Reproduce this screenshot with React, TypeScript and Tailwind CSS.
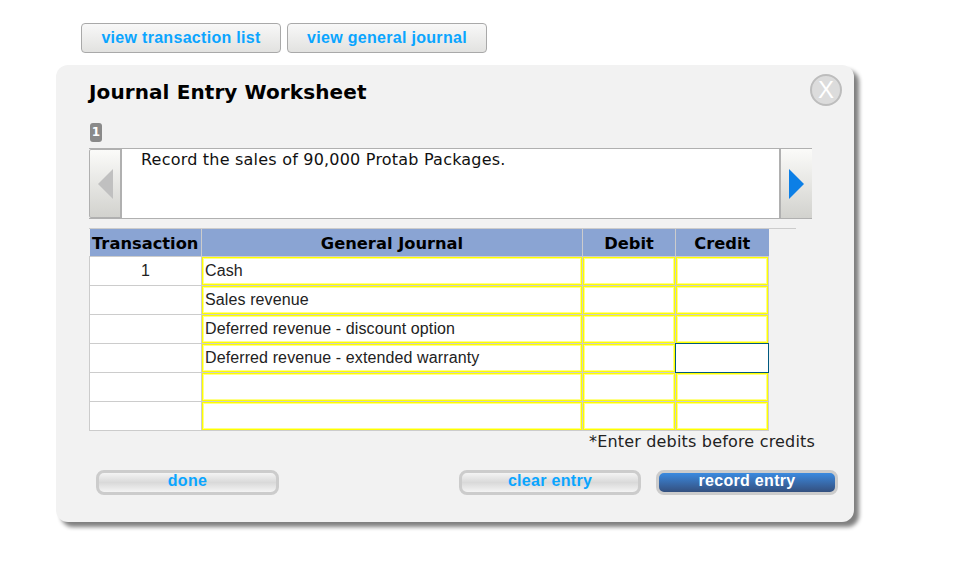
import React from 'react';

const rows = [
  { tx: '1', account: 'Cash' },
  { tx: '', account: 'Sales revenue' },
  { tx: '', account: 'Deferred revenue - discount option' },
  { tx: '', account: 'Deferred revenue - extended warranty' },
  { tx: '', account: '' },
  { tx: '', account: '' },
];

const verdana = 'font-["DejaVu_Sans",sans-serif]';
const arial = 'font-["Liberation_Sans",Arial,sans-serif]';

const TopButton = ({ label }: { label: string }) => (
  <button className={`w-[200px] h-[30px] rounded-[4px] border border-[#a9a9a9] bg-gradient-to-b from-[#f8f8f8] to-[#e2e2e0] text-[#0aa5ff] font-bold text-[16px] tracking-[0.3px] ${arial}`}>
    {label}
  </button>
);

const PillButton = ({ label, width, primary }: { label: string; width: string; primary?: boolean }) => (
  <button
    className={`${width} h-[25px] rounded-[8px] border-[3px] border-[#cccccc] font-bold text-[16px] tracking-[0.3px] leading-[12px] pt-[2px] pb-[5px] ${arial} ${
      primary
        ? 'bg-gradient-to-b from-[#3a8ae0] to-[#33507f] text-white'
        : 'bg-gradient-to-b from-[#f4f4f4] via-[#d9d9d9] to-[#f4f4f4] text-[#0aa5ff]'
    }`}
  >
    {label}
  </button>
);

const Cell = ({ focused, children }: { focused?: boolean; children?: React.ReactNode }) => (
  <td className="border border-[#cccccc] p-0 h-[29px]">
    <div
      className={`h-[28px] bg-white pl-[2px] text-[16px] tracking-[0.11px] leading-[25px] text-[#222222] ${arial} ${
        focused
          ? 'outline outline-1 outline-[#00597f]'
          : 'border border-[#ffff00] shadow-[inset_0_0_0_1px_#ffff88]'
      }`}
    >
      {children}
    </div>
  </td>
);

export default function App() {
  return (
    <div className="w-[977px] h-[567px] bg-white overflow-hidden pt-[23px] pl-[56px]">
      <div className="flex gap-[6px] pl-[25px]">
        <TopButton label="view transaction list" />
        <TopButton label="view general journal" />
      </div>

      <div className={`relative mt-[12px] w-[798px] h-[457px] rounded-[12px] bg-[#f2f2f2] shadow-[5px_5px_4px_#808080] pt-[13px] pl-[32px] text-black ${verdana}`}>
        <h1 className="font-bold text-[20px] leading-[28px] tracking-[0.1px] pl-[1px]">Journal Entry Worksheet</h1>

        {/* close */}
        <button className={`absolute top-[9px] right-[12px] w-[32px] h-[32px] rounded-full bg-[#dcdcdc] border-2 border-[#bdbdbd] text-white text-[24px] leading-[26px] ${arial}`}>
          X
        </button>

        <div className="mt-[17px] ml-[2px] w-[12px] h-[19px] rounded-[3px] bg-[#8a8a8a] text-white text-[12px] font-bold leading-[18px] text-center">
          1
        </div>

        {/* prompt */}
        <div className="mt-[6px] ml-[1px] flex w-[723px] h-[71px] bg-white border-y border-[#b0b0b0]">
          <button className="w-[33px] h-full shrink-0 flex items-center justify-center bg-gradient-to-b from-[#fbfbf9] to-[#d2d2ce] border border-[#b0b0b0] border-r-2 rounded-l-[2px]">
            <svg width="15" height="30" viewBox="0 0 15 30"><path d="M15 0V30L0 15Z" fill="#c0c0c0" /></svg>
          </button>
          <p className="flex-1 pl-[19px] pt-[1px] text-[16px] tracking-[0.21px] leading-[20px] text-[#111111]">Record the sales of 90,000 Protab Packages.</p>
          <button className="w-[33px] h-full shrink-0 flex items-center justify-center bg-gradient-to-b from-[#fbfbf9] to-[#d2d2ce] border-l-2 border-[#b0b0b0]">
            <svg width="15" height="30" viewBox="0 0 15 30"><path d="M0 0V30L15 15Z" fill="#0c7fe6" /></svg>
          </button>
        </div>

        <div className="mt-[9px] ml-[1px] w-[707px] border-t border-[#cccccc]">
          <table className="w-[679px] border-collapse table-fixed">
            <thead>
              <tr className="h-[27px] bg-[#8aa4d3] text-[16.3px] font-bold">
                <th className="w-[112px] border-r border-[#cccccc] p-0 pt-[3px] font-bold">Transaction</th>
                <th className="w-[381px] border-r border-[#cccccc] p-0 pt-[3px] font-bold">General Journal</th>
                <th className="w-[93px] border-r border-[#cccccc] p-0 pt-[3px] font-bold">Debit</th>
                <th className="w-[93px] p-0 pt-[3px] font-bold">Credit</th>
              </tr>
            </thead>
            <tbody>
              {rows.map((row, i) => (
                <tr key={i} className="h-[29px]">
                  <td className={`border border-[#cccccc] bg-white p-0 text-center text-[16px] text-[#222222] ${arial}`}>{row.tx}</td>
                  <Cell>{row.account}</Cell>
                  <Cell />
                  <Cell focused={i === 3} />
                </tr>
              ))}
            </tbody>
          </table>
        </div>

        <div className="w-[727px] mt-[1px] text-right text-[16px] tracking-[0.18px] leading-[20px] text-[#222222]">*Enter debits before credits</div>

        <div className="mt-[18px] ml-[8px] flex w-[742px]">
          <PillButton label="done" width="w-[183px]" />
          <div className="ml-auto flex gap-[15px]">
            <PillButton label="clear entry" width="w-[182px]" />
            <PillButton label="record entry" width="w-[182px]" primary />
          </div>
        </div>
      </div>
    </div>
  );
}
